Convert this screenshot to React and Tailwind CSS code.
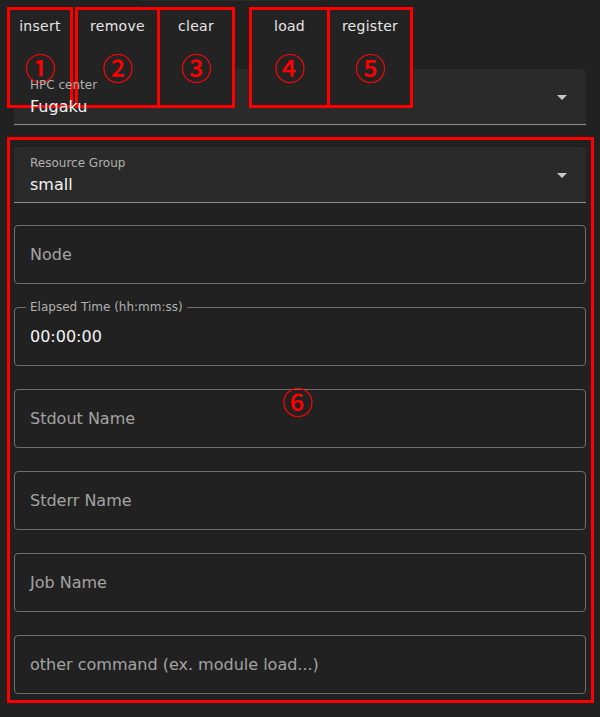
import React from 'react';

const font = { fontFamily: '"DejaVu Sans", "Noto Sans CJK JP", sans-serif' };

const ArrowDrop = () => (
    <svg viewBox="0 0 24 24" className="absolute right-[12px] top-[16px] h-[24px] w-[24px] fill-[#c8c8c8]">
        <path d="M7 10l5 5 5-5z" />
    </svg>
);

const FilledSelect = ({ label, value }) => (
    <div className="relative h-[56px] rounded-t-[4px] border-b border-[#8e8e8e] bg-[#2a2a2a]">
        <div className="relative z-20 pl-[16px] pt-[8px]">
            <div className="text-[12px] leading-[16px] text-[#b0b0b0]">{label}</div>
            <div className="mt-[3px] text-[16px] leading-[22px] text-[#f2f2f2]">{value}</div>
        </div>
        <ArrowDrop />
    </div>
);

const OutlinedField = ({ placeholder, label, value }) => (
    <div className="relative flex h-[59px] items-center rounded-[4px] border border-[#6f6f6f] px-[15px]">
        {label && (
            <span className="absolute left-[11px] top-[-9px] bg-[#212121] px-[4px] text-[12px] leading-[16px] text-[#b0b0b0]">
                {label}
            </span>
        )}
        {value ? (
            <span className="text-[16px] text-[#f2f2f2]">{value}</span>
        ) : (
            <span className="text-[16px] text-[#a3a3a3]">{placeholder}</span>
        )}
    </div>
);

const Circled = ({ children, className = '' }) => (
    <span
        className={`text-[31px] font-medium leading-[32px] text-[#ff0000] ${className}`}
        style={{ fontFamily: '"Noto Sans CJK JP", "DejaVu Sans", sans-serif' }}
    >
        {children}
    </span>
);

const ToolButton = ({ label, num, className }) => (
    <div className={`flex h-[101px] flex-col items-center border-[3px] border-[#ff0000] bg-[#232323] ${className}`}>
        <span className="pt-[6px] text-[14px] leading-[20px] tracking-[0.02em] text-[#e6e6e6]">{label}</span>
        <Circled className="mt-[15px]">{num}</Circled>
    </div>
);

export default function App() {
    const fields = [
        { placeholder: 'Node' },
        { label: 'Elapsed Time (hh:mm:ss)', value: '00:00:00' },
        { placeholder: 'Stdout Name' },
        { placeholder: 'Stderr Name' },
        { placeholder: 'Job Name' },
        { placeholder: 'other command (ex. module load...)' },
    ];

    return (
        <div className="relative min-h-screen bg-[#212121] px-[14px] pb-[23px] pt-[69px]" style={font}>
            <div className="absolute left-[141px] top-0 h-[1px] w-[181px] bg-[#2c2c2c]" />

            {/* toolbar, sits over the first select */}
            <div className="absolute left-[7px] top-[7px] z-10 flex">
                <ToolButton label="insert" num="①" className="w-[66px]" />
                <ToolButton label="remove" num="②" className="ml-[2px] w-[85px]" />
                <ToolButton label="clear" num="③" className="ml-[-3px] w-[78px]" />
                <ToolButton label="load" num="④" className="ml-[14px] w-[81px]" />
                <ToolButton label="register" num="⑤" className="ml-[-3px] w-[86px]" />
            </div>

            <FilledSelect label="HPC center" value="Fugaku" />

            <div className="relative mt-[22px]">
                <FilledSelect label="Resource Group" value="small" />
                <div className="mt-[22px] flex flex-col gap-[23px]">
                    {fields.map((f, i) => (
                        <OutlinedField key={i} {...f} />
                    ))}
                </div>

                {/* annotation frame */}
                <div className="pointer-events-none absolute bottom-[-9px] left-[-7px] right-[-8px] top-[-10px] z-30 border-[3px] border-[#ff0000]">
                    <Circled className="absolute left-[272px] top-[245px]">⑥</Circled>
                </div>
            </div>
        </div>
    );
}
